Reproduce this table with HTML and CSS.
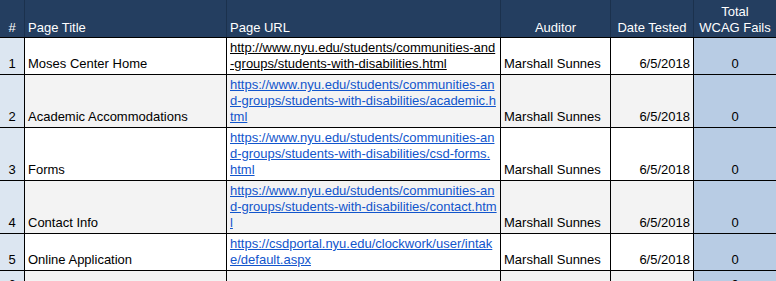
FILE: index.html
```html
<!DOCTYPE html>
<html>
<head>
<meta charset="utf-8">
<link rel="stylesheet" href="styles.css">
</head>
<body>
<div class="sheet">
  <div class="grid head">
    <div class="cell center">#</div>
    <div class="cell">Page Title</div>
    <div class="cell">Page URL</div>
    <div class="cell center">Auditor</div>
    <div class="cell center">Date Tested</div>
    <div class="cell center">Total<br>WCAG Fails</div>
  </div>
  <div class="grid body">
    <div class="cell num short">1</div>
    <div class="cell">Moses Center Home</div>
    <div class="cell"><a class="plain" href="#">http://www.nyu.edu/students/communities-and<br>-groups/students-with-disabilities.html</a></div>
    <div class="cell">Marshall Sunnes</div>
    <div class="cell right">6/5/2018</div>
    <div class="cell fail">0</div>

    <div class="cell num tall">2</div>
    <div class="cell alt">Academic Accommodations</div>
    <div class="cell alt"><a href="#">https://www.nyu.edu/students/communities-an<br>d-groups/students-with-disabilities/academic.h<br>tml</a></div>
    <div class="cell alt">Marshall Sunnes</div>
    <div class="cell alt right">6/5/2018</div>
    <div class="cell fail">0</div>

    <div class="cell num tall">3</div>
    <div class="cell">Forms</div>
    <div class="cell"><a href="#">https://www.nyu.edu/students/communities-an<br>d-groups/students-with-disabilities/csd-forms.<br>html</a></div>
    <div class="cell">Marshall Sunnes</div>
    <div class="cell right">6/5/2018</div>
    <div class="cell fail">0</div>

    <div class="cell num tall">4</div>
    <div class="cell alt">Contact Info</div>
    <div class="cell alt"><a href="#">https://www.nyu.edu/students/communities-an<br>d-groups/students-with-disabilities/contact.htm<br>l</a></div>
    <div class="cell alt">Marshall Sunnes</div>
    <div class="cell alt right">6/5/2018</div>
    <div class="cell fail">0</div>

    <div class="cell num short">5</div>
    <div class="cell">Online Application</div>
    <div class="cell"><a href="#">https://csdportal.nyu.edu/clockwork/user/intak<br>e/default.aspx</a></div>
    <div class="cell">Marshall Sunnes</div>
    <div class="cell right">6/5/2018</div>
    <div class="cell fail">0</div>

    <div class="cell num last">6</div>
    <div class="cell alt"></div>
    <div class="cell alt"></div>
    <div class="cell alt"></div>
    <div class="cell alt"></div>
    <div class="cell fail">0</div>
  </div>
</div>
</body>
</html>
```
FILE: styles.css
```css
html, body {
  margin: 0;
  padding: 0;
  background: #ffffff;
  overflow: hidden;
}

*, *::before, *::after { box-sizing: border-box; }

.sheet {
  width: 776px;
  font-family: "Liberation Sans", Arial, sans-serif;
  font-size: 13px;
  line-height: 16px;
  color: #000;
}

.grid {
  display: grid;
  grid-template-columns: 24px 201px 273px 109px 82px 82px;
  column-gap: 1px;
}

.head {
  background: #1b314d;
  height: 37px;
}

.head .cell {
  background: #243e60;
  color: #ffffff;
  padding: 0 3px 1px;
  white-space: nowrap;
}

.body {
  background: #000;
  row-gap: 1px;
  border-top: 1px solid #000;
}

.cell {
  display: flex;
  flex-direction: column;
  justify-content: flex-end;
  padding: 0 3px 2px;
  white-space: nowrap;
  overflow: hidden;
  background: #ffffff;
}

.center { text-align: center; align-items: center; }
.right { text-align: right; align-items: flex-end; }

.alt { background: #f3f3f3; }

.num {
  background: #dce6f1;
  text-align: center;
  align-items: center;
  padding-left: 0;
  padding-right: 0;
}

.fail {
  background: #b8cce4;
  text-align: center;
  align-items: center;
}

.short { height: 36px; }
.tall { height: 52px; }
.last { height: 24px; }

a {
  color: #1155cc;
  text-decoration: underline;
}
a.plain { color: #000; }
```
